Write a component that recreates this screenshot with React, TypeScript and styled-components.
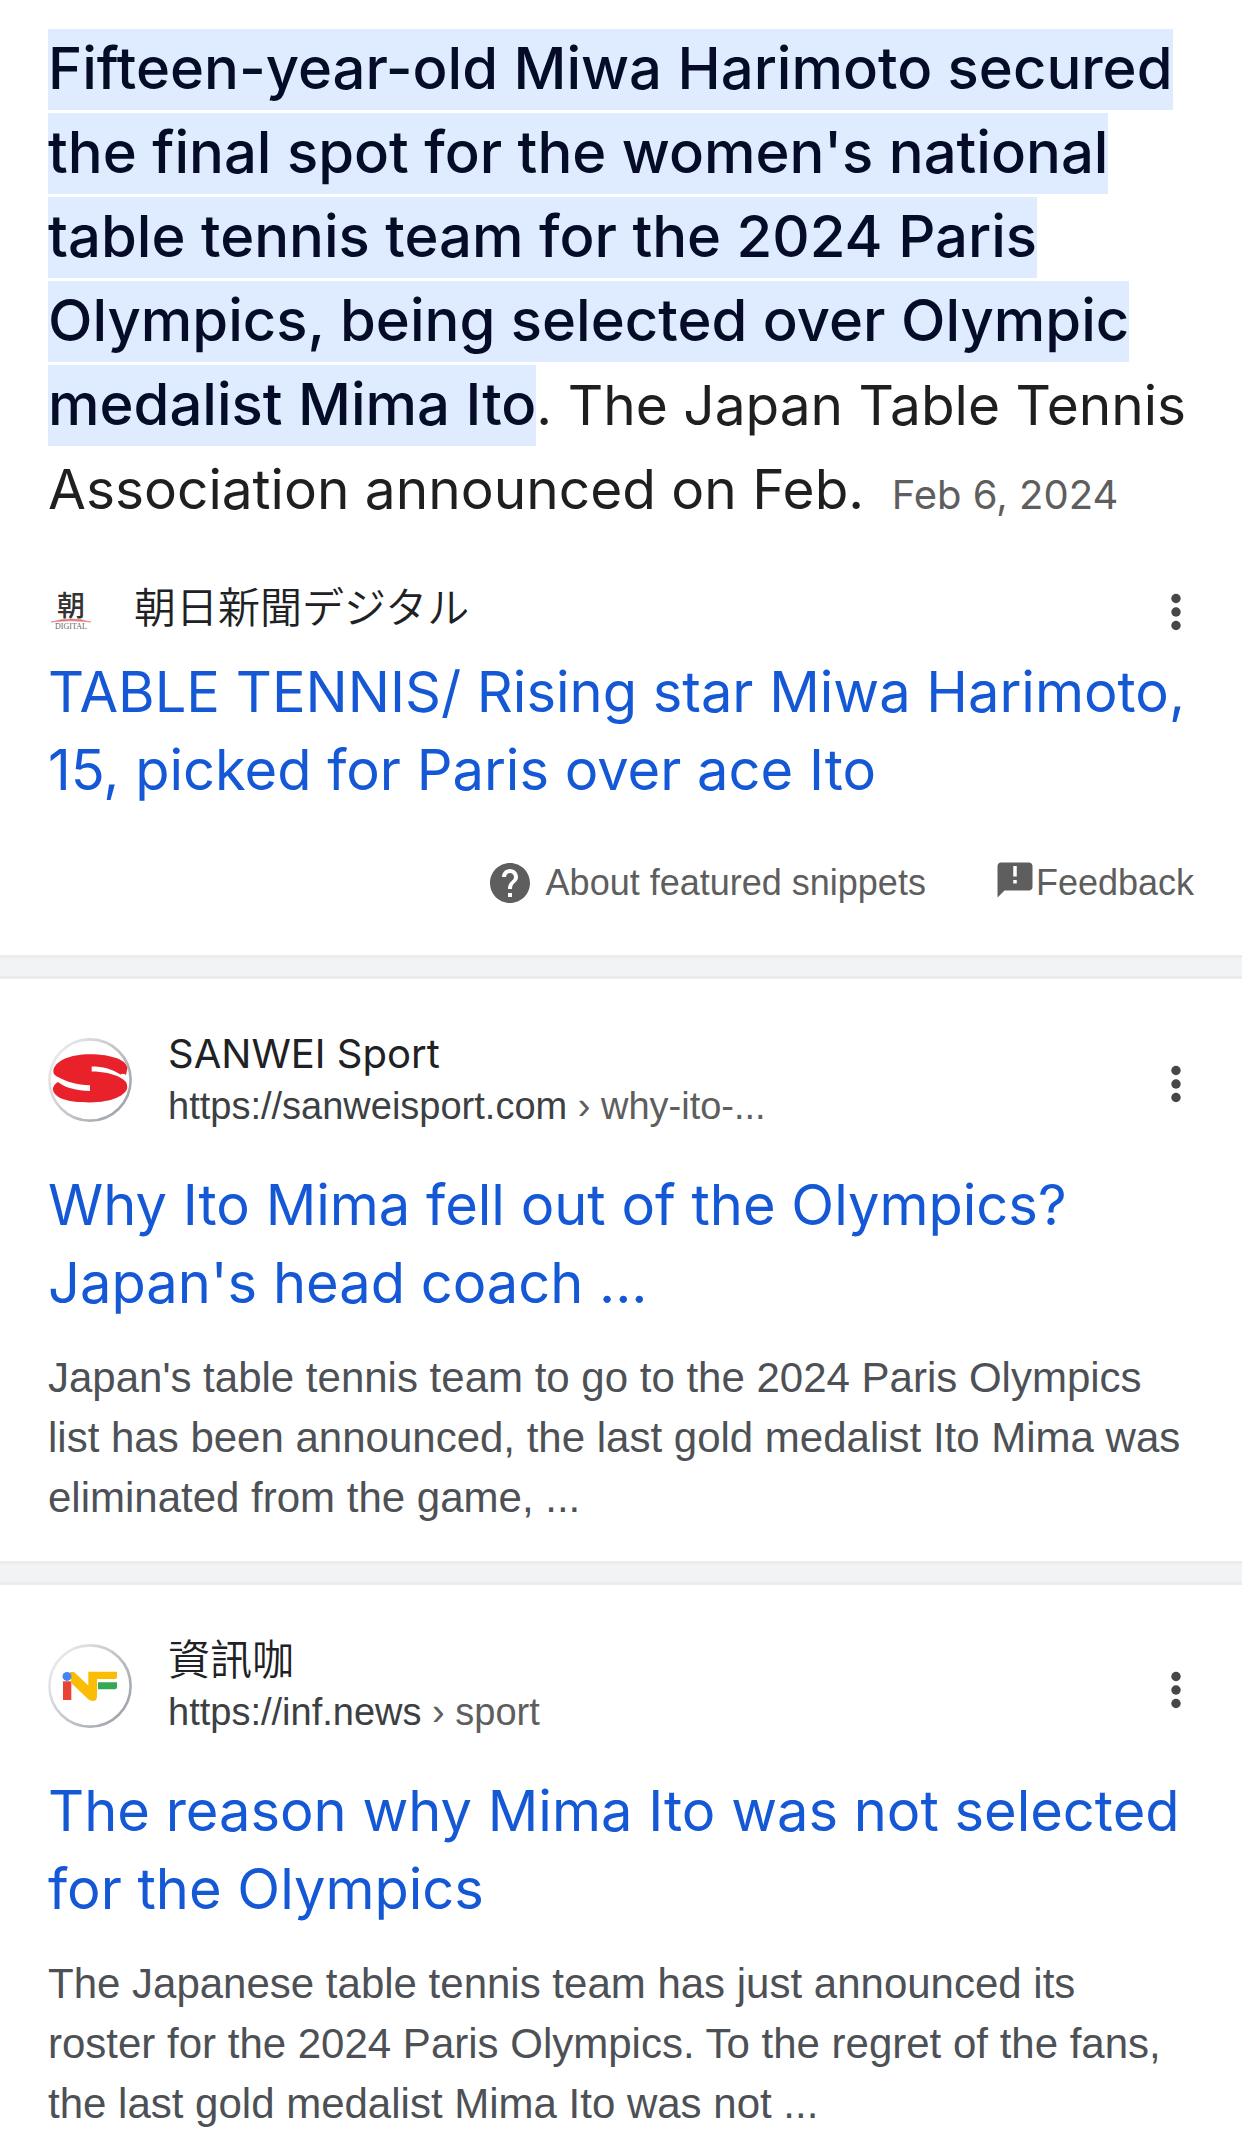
import React from "react";
import styled, { createGlobalStyle } from "styled-components";

const display = `Inter, Roboto, "Noto Sans CJK JP", "Noto Sans CJK TC", sans-serif`;
const body = `"Liberation Sans", Arial, "Noto Sans CJK JP", sans-serif`;

const GlobalStyle = createGlobalStyle`
  *, *::before, *::after { box-sizing: border-box; }
  body { margin: 0; background: #fff; font-family: ${body}; }
  h3, p { margin: 0; font-weight: 400; }
`;

const Divider = styled.hr`
  height: 24px;
  margin: 0;
  border: solid #ebecee;
  border-width: 3px 0;
  background: #f1f3f4;
`;

const FeaturedSection = styled.section`
  padding: 27px 48px 48px;
`;

const Answer = styled.p`
  font-family: ${display};
  font-size: 55px;
  line-height: 84px;
  color: #1f1f1f;
`;

const Highlight = styled.mark`
  padding: 4px 0 7px;
  background: #dfebff;
  color: #040c28;
  font-size: 58px;
  font-weight: 500;
  line-height: 1;
`;

const AnswerDate = styled.time`
  margin-left: 12px;
  font-size: 40px;
  line-height: 1;
  white-space: nowrap;
  color: #5e5e5e;
`;

const SourceRow = styled.div`
  display: flex;
  align-items: center;
  margin-top: 52px;
`;

const SourceIcon = styled.svg`
  flex: none;
  width: 46px;
  height: 46px;
  margin-right: 40px;
`;

const SiteName = styled.div<{ $cjk?: boolean; $line: number }>`
  font-family: ${display};
  font-size: ${(p) => (p.$cjk ? 42 : 40)}px;
  font-weight: ${(p) => (p.$cjk ? 350 : 400)};
  line-height: ${(p) => p.$line}px;
  color: #202124;
`;

const MenuButton = styled.button`
  display: flex;
  flex: none;
  justify-content: center;
  width: 36px;
  margin: 8px 0 0 auto;
  padding: 0;
  border: 0;
  background: none;
  color: #474747;
`;

const Title = styled.h3<{ $gap: number }>`
  margin-top: ${(p) => p.$gap}px;
  font-family: ${display};
  font-size: 56px;
  line-height: 78px;
`;

const TitleLink = styled.a`
  color: #1558d6;
  text-decoration: none;
`;

const SnippetFooter = styled.div`
  display: flex;
  justify-content: flex-end;
  gap: 68px;
  margin-top: 50px;
`;

const FooterLink = styled.a<{ $gap: number }>`
  display: flex;
  align-items: center;
  gap: ${(p) => p.$gap}px;
  font-size: 36px;
  line-height: 48px;
  color: #5e5e5e;
  text-decoration: none;
`;

const HelpIcon = styled.svg`
  width: 48px;
  height: 48px;
`;

const FeedbackIcon = styled.svg`
  width: 42px;
  height: 42px;
  margin-bottom: 6px;
`;

const ResultSection = styled.section`
  padding: 49px 48px 33px;
`;

const ResultHeader = styled.header`
  display: flex;
  align-items: center;
`;

const Favicon = styled.svg`
  flex: none;
  width: 84px;
  height: 84px;
  margin-right: 36px;
`;

const Url = styled.cite`
  display: block;
  font-size: 38px;
  font-style: normal;
  line-height: 52px;
  color: #3c4043;
`;

const UrlPath = styled.span`
  color: #5e5e5e;
`;

const Description = styled.p`
  margin-top: 26px;
  font-size: 42px;
  line-height: 60px;
  color: #4d5156;
`;

function Menu({ label }: { label: string }) {
  return (
    <MenuButton type="button" aria-label={label}>
      <svg width="36" height="42" viewBox="0 0 36 42" fill="currentColor" aria-hidden="true">
        <circle cx="18" cy="7.5" r="4.7" />
        <circle cx="18" cy="21" r="4.7" />
        <circle cx="18" cy="34.5" r="4.7" />
      </svg>
    </MenuButton>
  );
}

function Ring({ id }: { id: string }) {
  return (
    <>
      <defs>
        <linearGradient id={id} x1="0" y1="0.15" x2="1" y2="0.85">
          <stop offset="0" stopColor="#eeeff1" />
          <stop offset="1" stopColor="#9aa0a6" />
        </linearGradient>
      </defs>
      <circle cx="42" cy="42" r="40.6" fill="#fff" stroke={`url(#${id})`} strokeWidth="2.6" />
    </>
  );
}

function SanweiLogo() {
  return (
    <Favicon viewBox="0 0 84 84" aria-hidden="true">
      <Ring id="ring-sanwei" />
      <path
        fill="#e8212b"
        d="M78 37 Q75.5 35 72.5 36.5 C63 30.5 55 28.4 43.7 28.4 V33.6 C55 33.6 65 35.8 72 39.5 Q79.5 43 79.3 49 C79 57 64 64.4 42 64.4 C20 64.4 6 60.5 4.8 51 Q5.5 46.5 9.8 44 C18 50 28 52.6 42 53 V47.2 C29 47 18 43.5 11 39.5 Q5 37 5.3 33 C6.5 23 22 16.3 42 16.3 C64 16.3 79.5 22.5 79.3 30.5 Z"
      />
    </Favicon>
  );
}

function InfLogo() {
  return (
    <Favicon viewBox="0 0 84 84" aria-hidden="true">
      <Ring id="ring-inf" />
      <rect x="15" y="37.3" width="8.3" height="18.7" fill="#ea4335" />
      <path
        fill="#fbbc04"
        d="M22 28 H26 L40.3 41.5 V27.7 H69 V33 Q69 35 67 35 H49 V52.5 Q49 57 44.7 57 Q42 57 40 55 L23.3 39 Z"
      />
      <circle cx="19" cy="32.4" r="4.5" fill="#4285f4" />
      <path fill="#34a853" d="M50 38.3 H69 V43 Q69 45.3 66.7 45.3 H50 Z" />
    </Favicon>
  );
}

type Result = {
  name: string;
  cjk?: boolean;
  host: string;
  path: string;
  title: string;
  text: string;
  Logo: () => React.JSX.Element;
};

const results: Result[] = [
  {
    name: "SANWEI Sport",
    host: "https://sanweisport.com",
    path: "why-ito-...",
    title: "Why Ito Mima fell out of the Olympics? Japan's head coach ...",
    text: "Japan's table tennis team to go to the 2024 Paris Olympics list has been announced, the last gold medalist Ito Mima was eliminated from the game, ...",
    Logo: SanweiLogo,
  },
  {
    name: "資訊咖",
    cjk: true,
    host: "https://inf.news",
    path: "sport",
    title: "The reason why Mima Ito was not selected for the Olympics",
    text: "The Japanese table tennis team has just announced its roster for the 2024 Paris Olympics. To the regret of the fans, the last gold medalist Mima Ito was not ...",
    Logo: InfLogo,
  },
];

export default function App() {
  return (
    <main>
      <GlobalStyle />
      <FeaturedSection>
        <Answer>
          <Highlight>
            Fifteen-year-old Miwa Harimoto secured the final spot for the women's national table tennis
            team for the 2024 Paris Olympics, being selected over Olympic medalist Mima Ito
          </Highlight>
          . The Japan Table Tennis Association announced on Feb.{" "}
          <AnswerDate dateTime="2024-02-06">Feb 6, 2024</AnswerDate>
        </Answer>
        <SourceRow>
          <SourceIcon viewBox="0 0 46 46" aria-hidden="true">
            <text x="9" y="31" fontFamily="Noto Sans CJK JP" fontWeight="500" fontSize="28" fill="#333">
              朝
            </text>
            <path d="M3 37 Q23 31 43 37 Q23 34.5 3 37 Z" fill="#e06666" stroke="#e58a8a" strokeWidth="0.7" />
            <text x="23" y="44" textAnchor="middle" fontFamily="Liberation Serif" fontSize="8" fill="#666">
              DIGITAL
            </text>
          </SourceIcon>
          <SiteName $cjk $line={48} lang="ja">
            朝日新聞デジタル
          </SiteName>
          <Menu label="About this result" />
        </SourceRow>
        <Title $gap={20}>
          <TitleLink href="#asahi">
            TABLE TENNIS/ Rising star Miwa Harimoto, 15, picked for Paris over ace Ito
          </TitleLink>
        </Title>
        <SnippetFooter>
          <FooterLink $gap={12} href="#about">
            <HelpIcon viewBox="0 0 24 24" fill="currentColor" aria-hidden="true">
              <path d="M12 2C6.48 2 2 6.48 2 12s4.48 10 10 10 10-4.48 10-10S17.52 2 12 2zm1 17h-2v-2h2v2zm2.07-7.75l-.9.92C13.45 12.9 13 13.5 13 15h-2v-.5c0-1.1.45-2.1 1.17-2.83l1.24-1.26c.37-.36.59-.86.59-1.41 0-1.1-.9-2-2-2s-2 .9-2 2H8c0-2.21 1.79-4 4-4s4 1.79 4 4c0 .88-.36 1.68-.93 2.25z" />
            </HelpIcon>
            About featured snippets
          </FooterLink>
          <FooterLink $gap={0} href="#feedback">
            <FeedbackIcon viewBox="0 0 24 24" fill="currentColor" aria-hidden="true">
              <path d="M20 2H4c-1.1 0-1.99.9-1.99 2L2 22l4-4h14c1.1 0 2-.9 2-2V4c0-1.1-.9-2-2-2zm-7 12h-2v-2h2v2zm0-4h-2V4h2v6z" />
            </FeedbackIcon>
            Feedback
          </FooterLink>
        </SnippetFooter>
      </FeaturedSection>
      {results.map(({ name, cjk, host, path, title, text, Logo }) => (
        <React.Fragment key={host}>
          <Divider />
          <ResultSection>
            <ResultHeader>
              <Logo />
              <div>
                <SiteName $cjk={cjk} $line={52} lang={cjk ? "zh-Hant" : undefined}>
                  {name}
                </SiteName>
                <Url>
                  {host}
                  <UrlPath> › {path}</UrlPath>
                </Url>
              </div>
              <Menu label={`About ${name}`} />
            </ResultHeader>
            <Title $gap={34}>
              <TitleLink href={host}>{title}</TitleLink>
            </Title>
            <Description>{text}</Description>
          </ResultSection>
        </React.Fragment>
      ))}
    </main>
  );
}
